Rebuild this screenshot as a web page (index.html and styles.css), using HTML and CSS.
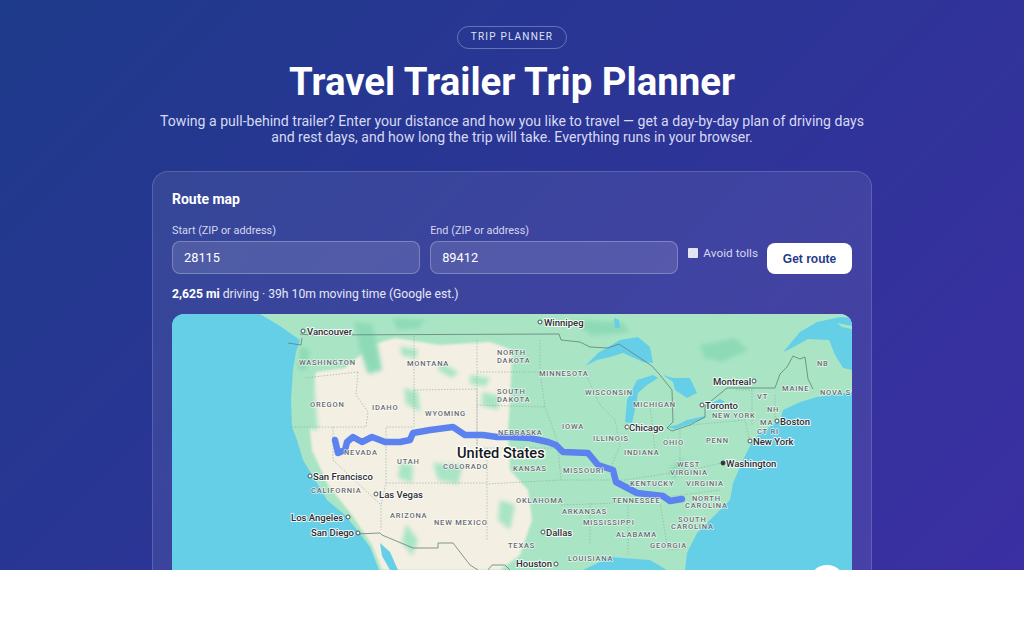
FILE: index.html
```html
<!DOCTYPE html>
<html>
<head>
    <meta charset="utf-8">
    <title>Travel Trailer Trip Planner</title>
    <link rel="stylesheet" href="styles.css">
</head>
<body>
<div class="hero">
    <span class="pill">TRIP PLANNER</span>
    <h1>Travel Trailer Trip Planner</h1>
    <p class="intro">Towing a pull-behind trailer? Enter your distance and how you like to travel — get a day-by-day plan of driving days and rest days, and how long the trip will take. Everything runs in your browser.</p>

    <div class="card">
        <h2>Route map</h2>
        <div class="route-form">
            <label class="field">
                <span>Start (ZIP or address)</span>
                <input type="text" value="28115">
            </label>
            <label class="field">
                <span>End (ZIP or address)</span>
                <input type="text" value="89412">
            </label>
            <label class="tolls"><i class="check"></i>Avoid tolls</label>
            <button type="button" class="go">Get route</button>
        </div>
        <p class="summary"><b>2,625 mi</b> driving · 39h 10m moving time (Google est.)</p>

        <div class="map">
            <!-- viewBox uses page coordinates, easier to read off the screenshot -->
            <svg viewBox="172 314 680 256" width="680" height="256">
                <defs>
                    <filter id="soft"><feGaussianBlur stdDeviation="2.2"/></filter>
                    <filter id="edge"><feGaussianBlur stdDeviation="1.2"/></filter>
                </defs>
                <rect x="172" y="314" width="680" height="256" fill="#66cfe8"/>

                <!-- land -->
                <path fill="#a9e5c5" d="M260 314 L280 326 L300 340 L296 352 L293 370 L291 400 L292 427 L297 440 L303 460 L317 483 L327 500 L345 515 L357 530 L370 547 L379 570 L583 570 L610 557 L650 560 L667 570 L685 570 L687 553 L697 533 L713 517 L730 500 L733 483 L743 460 L753 440 L762 432 L780 420 L783 410 L800 402 L817 397 L852 392 L852 314 Z"/>
                <!-- tan, dry west -->
                <path fill="#f4efe3" filter="url(#edge)" d="M316 372 L345 368 L372 345 L395 338 L440 345 L490 342 L512 350 L510 400 L508 430 L510 470 L528 490 L532 520 L520 555 L500 570 L382 570 L372 545 L352 515 L328 485 L312 450 L308 410 Z"/>
                <!-- green patches on the tan -->
                <g fill="#a9e5c5" filter="url(#soft)">
                    <path d="M404 388 L418 392 L420 412 L406 404 Z"/>
                    <path d="M400 346 L418 350 L416 358 L402 356 Z"/>
                    <path d="M440 362 L458 372 L452 378 L438 370 Z"/>
                    <path d="M400 463 L413 465 L412 483 L398 478 Z"/>
                    <path d="M433 463 L463 465 L458 484 L438 480 Z"/>
                    <path d="M406 524 L418 540 L412 556 L402 542 Z"/>
                    <path d="M300 372 L314 380 L318 430 L304 428 Z"/>
                    <path d="M482 392 L500 396 L498 410 L482 406 Z"/>
                    <path d="M470 375 L490 378 L486 386 L470 384 Z"/>
                    <path d="M500 500 L515 505 L510 530 L498 520 Z"/>
                </g>
                <g fill="#8edab7" filter="url(#soft)">
                    <path d="M354 322 L372 324 L378 348 L382 370 L368 374 L360 350 Z"/>
                    <path d="M300 346 L310 350 L306 370 L298 370 Z"/>
                    <path d="M392 318 L426 320 L418 328 L398 330 Z"/>
                    <path d="M700 345 L735 338 L748 350 L722 362 L704 358 Z"/>
                    <path d="M570 320 L622 322 L630 332 L592 336 Z"/>
                    <path d="M668 470 L682 458 L688 464 L674 480 Z"/>
                </g>

                <!-- water -->
                <g fill="#66cfe8">
                    <path d="M585 366 L598 353 L620 340 L638 337 L650 347 L653 363 L643 362 L623 353 L610 357 L597 360 Z"/>
                    <path d="M625 422 L627 400 L637 380 L653 375 L658 378 L647 385 L638 393 L635 410 L632 423 Z"/>
                    <path d="M663 375 L673 378 L690 378 L697 393 L687 398 L675 390 L673 382 Z"/>
                    <path d="M667 427 L677 425 L687 420 L705 416 L705 418 L687 425 L675 429 Z"/>
                    <path d="M706 406 L720 399 L725 402 L712 409 Z"/>
                    <path d="M380 543 L390 552 L398 570 L390 570 L382 556 Z"/>
                    <path d="M614 318 L619 320 L620 328 L615 328 Z"/>
                    <path d="M783 352 L800 332 L817 322 L840 317 L852 318 L852 370 L843 368 L835 355 L829 340 L808 339 L790 349 Z"/>
                </g>
                <path fill="#a9e5c5" d="M837 323 L852 326 L852 329 L842 327 Z"/>

                <!-- state lines -->
                <g fill="none" stroke="#8aa89a" stroke-width=".6" stroke-dasharray="1.5 1.5">
                    <path d="M358 372 L304 378 M358 372 L356 395 L368 412 L366 427 L292 427"/>
                    <path d="M333 427 L333 460 L381 505 L381 530"/>
                    <path d="M414 336 L414 427 L386 427 L386 483 L381 505"/>
                    <path d="M414 390 L477 389 L477 448 L487 448 L487 483 L487 540"/>
                    <path d="M477 340 L477 448"/>
                    <path d="M386 483 L487 483"/>
                    <path d="M477 372 L540 372 M477 405 L545 407 M487 448 L558 448 L561 480 L487 484"/>
                    <path d="M540 340 L540 372 L545 407 L560 448 M585 372 L600 405 L615 420 L620 445 L610 470"/>
                    <path d="M561 480 L625 480 L690 470 L735 460"/>
                    <path d="M650 405 L655 450 M680 430 L680 470 M561 505 L620 503 L720 490"/>
                    <path d="M590 503 L590 545 M628 503 L628 555 M660 503 L668 550 L690 548"/>
                    <path d="M690 425 L745 420 L750 443 M736 390 L752 390 M752 390 L752 425 M775 395 L775 420"/>
                </g>
                <!-- border with Canada and Mexico -->
                <g fill="none" stroke="#62807a" stroke-width=".8">
                    <path d="M300 334 L310 335 L559 334 L561 340 L580 342 L590 347 L608 348 L619 344 L652 366 L660 375 L672 390 L673 422 L667 428 L672 431 L690 425 L705 417 L705 406 L727 388 L745 388 L775 388 L780 374 L787 367 L793 356 L800 359 L805 357 L808 379 L813 389"/>
                    <path d="M302 338 L301 345 L288 343"/>
                    <path d="M357 534 L380 533 L382 535 L413 548 L438 548 L438 543 L453 543 L470 565 L478 570"/>
                    <path d="M488 570 L492 565 L505 565 L510 570"/>
                </g>

                <!-- route -->
                <path fill="none" stroke="#5c82ef" stroke-width="6.5" stroke-linecap="round" stroke-linejoin="round" d="M335 440 L338 453 L345 450 L347 442 L353 437 L362 442 L372 437 L385 442 L400 442 L410 440 L413 433 L430 430 L453 427 L465 435 L483 435 L497 437 L510 437 L530 438 L548 442 L556 445 L563 452 L588 453 L598 465 L613 470 L616 482 L637 493 L663 496 L670 501 L682 499"/>

                <g class="state">
                    <text x="299" y="365">WASHINGTON</text>
                    <text x="407" y="366">MONTANA</text>
                    <text x="497" y="355">NORTH</text>
                    <text x="497" y="363">DAKOTA</text>
                    <text x="539" y="376">MINNESOTA</text>
                    <text x="310" y="407">OREGON</text>
                    <text x="372" y="410">IDAHO</text>
                    <text x="425" y="416">WYOMING</text>
                    <text x="497" y="394">SOUTH</text>
                    <text x="497" y="402">DAKOTA</text>
                    <text x="585" y="395">WISCONSIN</text>
                    <text x="633" y="407">MICHIGAN</text>
                    <text x="498" y="435">NEBRASKA</text>
                    <text x="562" y="429">IOWA</text>
                    <text x="593" y="441">ILLINOIS</text>
                    <text x="663" y="445">OHIO</text>
                    <text x="706" y="443">PENN</text>
                    <text x="712" y="418">NEW YORK</text>
                    <text x="344" y="455">NEVADA</text>
                    <text x="397" y="464">UTAH</text>
                    <text x="443" y="469">COLORADO</text>
                    <text x="513" y="471">KANSAS</text>
                    <text x="563" y="473">MISSOURI</text>
                    <text x="624" y="455">INDIANA</text>
                    <text x="677" y="467">WEST</text>
                    <text x="670" y="475">VIRGINIA</text>
                    <text x="686" y="486">VIRGINIA</text>
                    <text x="630" y="486">KENTUCKY</text>
                    <text x="612" y="503">TENNESSEE</text>
                    <text x="692" y="501">NORTH</text>
                    <text x="685" y="508">CAROLINA</text>
                    <text x="678" y="522">SOUTH</text>
                    <text x="671" y="529">CAROLINA</text>
                    <text x="311" y="493">CALIFORNIA</text>
                    <text x="390" y="518">ARIZONA</text>
                    <text x="434" y="525">NEW MEXICO</text>
                    <text x="516" y="503">OKLAHOMA</text>
                    <text x="562" y="514">ARKANSAS</text>
                    <text x="583" y="525">MISSISSIPPI</text>
                    <text x="616" y="537">ALABAMA</text>
                    <text x="650" y="548">GEORGIA</text>
                    <text x="508" y="548">TEXAS</text>
                    <text x="568" y="561">LOUISIANA</text>
                    <text x="782" y="391">MAINE</text>
                    <text x="817" y="366">NB</text>
                    <text x="820" y="395">NOVA S</text>
                    <text x="757" y="399">VT</text>
                    <text x="767" y="412">NH</text>
                    <text x="760" y="425">MA</text>
                    <text x="757" y="434">CT RI</text>
                </g>

                <g class="dots">
                    <circle cx="303" cy="331" r="2"/>
                    <circle cx="540" cy="322" r="2"/>
                    <circle cx="754" cy="381" r="2"/>
                    <circle cx="702" cy="405" r="2"/>
                    <circle cx="777" cy="421" r="2"/>
                    <circle cx="627" cy="427" r="2"/>
                    <circle cx="750" cy="441" r="2"/>
                    <circle cx="723" cy="463" r="2" class="capital"/>
                    <circle cx="310" cy="476" r="2"/>
                    <circle cx="376" cy="494" r="2"/>
                    <circle cx="348" cy="517" r="2"/>
                    <circle cx="358" cy="533" r="2"/>
                    <circle cx="543" cy="532" r="2"/>
                    <circle cx="556" cy="564" r="2"/>
                </g>
                <g class="city">
                    <text x="307" y="335">Vancouver</text>
                    <text x="544" y="326">Winnipeg</text>
                    <text x="713" y="385">Montreal</text>
                    <text x="705" y="409">Toronto</text>
                    <text x="780" y="425">Boston</text>
                    <text x="629" y="431">Chicago</text>
                    <text x="753" y="445">New York</text>
                    <text x="726" y="467">Washington</text>
                    <text x="313" y="480">San Francisco</text>
                    <text x="379" y="498">Las Vegas</text>
                    <text x="291" y="521">Los Angeles</text>
                    <text x="311" y="536">San Diego</text>
                    <text x="546" y="536">Dallas</text>
                    <text x="516" y="567">Houston</text>
                </g>
                <text class="country" x="457" y="458">United States</text>

                <circle cx="827" cy="583" r="18" fill="#fff"/>
            </svg>
        </div>
    </div>
</div>
</body>
</html>
```

FILE: styles.css
```css
body {
    margin: 0;
    background: #ffffff;
    font-family: Roboto, "Liberation Sans", sans-serif;
}

.hero {
    height: 570px;
    overflow: hidden;
    box-sizing: border-box;
    padding-top: 26px;
    text-align: center;
    color: #ffffff;
    background: linear-gradient(135deg, #1e3a8a 0%, #3b2fa3 100%);
}

.pill {
    display: block;
    width: 110px;
    box-sizing: border-box;
    height: 23px;
    margin: 0 auto;
    line-height: 20px;
    border: 1px solid rgba(255, 255, 255, .3);
    border-radius: 12px;
    font-size: 10px;
    letter-spacing: 1.2px;
    color: #dfe3f6;
}

h1 {
    margin: 11px 0 0;
    font-size: 38.4px;
    line-height: 44px;
    font-weight: 700;
}

.intro {
    width: 720px;
    margin: 9px auto 0;
    font-size: 14.08px;
    line-height: 16px;
    color: #d6daf4;
}

.card {
    width: 720px;
    box-sizing: border-box;
    margin: 26px auto 0;
    padding: 19px 19px;
    height: 500px;
    border: 1px solid rgba(255, 255, 255, .16);
    border-radius: 16px;
    background: rgba(255, 255, 255, .08);
    text-align: left;
}

h2 {
    margin: 0;
    font-size: 14px;
    line-height: 16px;
    font-weight: 700;
}

.route-form {
    display: flex;
    align-items: flex-end;
    margin-top: 17px;
}

.field {
    flex: 1 1 0;
    margin-right: 10px;
    font-size: 10.88px;
    color: #d3d7f1;
}

.field span {
    display: block;
    line-height: 13px;
    margin-bottom: 4px;
}

.field input {
    display: block;
    width: 100%;
    height: 33px;
    box-sizing: border-box;
    padding: 0 11px;
    border: 1px solid rgba(255, 255, 255, .25);
    border-radius: 8px;
    background: rgba(255, 255, 255, .12);
    color: #ffffff;
    font-family: Roboto, sans-serif;
    font-size: 12.8px;
}

.tolls {
    display: flex;
    align-items: center;
    margin-right: 9px;
    padding-bottom: 14px;
    line-height: 14px;
    font-size: 11.84px;
    white-space: nowrap;
    color: #d3d7f1;
}

.check {
    width: 10px;
    height: 10px;
    margin-right: 5px;
    background: #e4e5f3;
    border-radius: 1px;
}

.go {
    width: 85px;
    height: 31px;
    padding: 0;
    border: 0;
    border-radius: 8px;
    background: #ffffff;
    color: #1e3a8a;
    font-family: "Liberation Sans", sans-serif;
    font-size: 12px;
    font-weight: 700;
}

.summary {
    margin: 13px 0 0;
    font-size: 12.16px;
    line-height: 14px;
    color: #e6e8f8;
}

.summary b {
    color: #ffffff;
}

.map {
    margin-top: 13px;
    height: 400px;
    overflow: hidden;
    border-radius: 12px 12px 0 0;
    background: #66cfe8;
}

.map svg {
    display: block;
}

.map text {
    font-family: Roboto, "Liberation Sans", sans-serif;
    paint-order: stroke;
    stroke: #ffffff;
    stroke-linejoin: round;
}

.state text {
    font-size: 7.5px;
    font-weight: 500;
    letter-spacing: .8px;
    fill: #666b70;
    stroke-width: 1.5px;
    stroke-opacity: .7;
}

.city text {
    font-size: 9.5px;
    font-weight: 500;
    fill: #2b2f33;
    stroke-width: 2px;
    stroke-opacity: .85;
}

.map .country {
    font-size: 14.6px;
    font-weight: 500;
    fill: #16181a;
    stroke-width: 2.5px;
}

.dots circle {
    fill: #ffffff;
    stroke: #4a5056;
    stroke-width: 1;
}

.dots .capital {
    fill: #30353a;
    stroke: #30353a;
}
```
